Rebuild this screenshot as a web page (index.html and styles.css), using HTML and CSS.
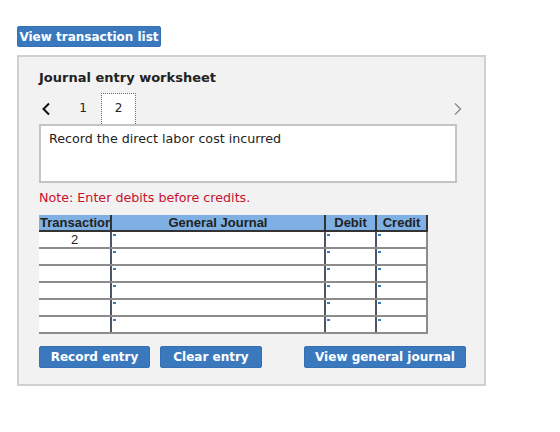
FILE: index.html
```html
<!DOCTYPE html>
<html lang="en">
<head>
    <meta charset="UTF-8">
    <title>Journal entry worksheet</title>
    <link rel="stylesheet" href="styles.css">
</head>
<body>

<div class="page">
    <button class="btn btn-list">View transaction list</button>

    <div class="worksheet">
        <h2 class="title">Journal entry worksheet</h2>

        <!-- tab strip -->
        <div class="tabs">
            <span class="arrow prev">
                <svg width="10" height="14" viewBox="0 0 10 14"><path d="M8 1.5 L2.5 7 L8 12.5" fill="none" stroke="#111" stroke-width="2"/></svg>
            </span>
            <span class="tab tab-first">1</span>
            <span class="tab active">2</span>
            <span class="arrow next">
                <svg width="10" height="14" viewBox="0 0 10 14"><path d="M2 1.5 L7.5 7 L2 12.5" fill="none" stroke="#8a8a8a" stroke-width="1.4"/></svg>
            </span>
        </div>

        <div class="desc">Record the direct labor cost incurred</div>

        <p class="note">Note: Enter debits before credits.</p>

        <table class="journal">
            <thead>
                <tr>
                    <th class="c-trans"><div class="clip">Transaction</div></th>
                    <th class="c-acct">General Journal</th>
                    <th class="c-debit">Debit</th>
                    <th class="c-credit">Credit</th>
                </tr>
            </thead>
            <tbody>
                <tr><td class="trans">2</td><td class="cell"></td><td class="cell"></td><td class="cell"></td></tr>
                <tr><td class="trans"></td><td class="cell"></td><td class="cell"></td><td class="cell"></td></tr>
                <tr><td class="trans"></td><td class="cell"></td><td class="cell"></td><td class="cell"></td></tr>
                <tr><td class="trans"></td><td class="cell"></td><td class="cell"></td><td class="cell"></td></tr>
                <tr><td class="trans"></td><td class="cell"></td><td class="cell"></td><td class="cell"></td></tr>
                <tr><td class="trans"></td><td class="cell"></td><td class="cell"></td><td class="cell"></td></tr>
            </tbody>
        </table>

        <div class="actions">
            <button class="btn btn-record">Record entry</button>
            <button class="btn btn-clear">Clear entry</button>
            <button class="btn btn-view">View general journal</button>
        </div>
    </div>
</div>

</body>
</html>
```

FILE: styles.css
```css
body {
    margin: 0;
    background-color: #ffffff;
    color: #222;
    font-family: "DejaVu Sans", Verdana, sans-serif;
}
.page {
    padding: 26px 0 0 17px;
}
.btn {
    font-family: "DejaVu Sans", Verdana, sans-serif;
    font-weight: bold;
    font-size: 12px;
    color: #ffffff;
    background-color: #3b79bf;
    border: 1px solid #3470b3;
    border-radius: 2px;
    height: 22px;
    padding: 0;
    cursor: pointer;
}
.btn-list {
    display: block;
    width: 144px;
    height: 21px;
}
.worksheet {
    margin-top: 8px;
    width: 465px;
    height: 327px;
    box-sizing: content-box;
    background-color: #f2f2f2;
    border: 2px solid #d0d0d0;
    padding: 0;
}
.title {
    font-size: 13px;
    font-weight: bold;
    margin: 13px 0 0 20px;
    line-height: 16px;
}
/* Tabs */
.tabs {
    display: flex;
    align-items: center;
    margin: 7px 0 0 20px;
    width: 418px;
    height: 31px;
    position: relative;
}
.arrow {
    display: flex;
    align-items: center;
}
.prev {
    margin-left: 2px;
}
.next {
    margin-left: auto;
    margin-right: -6px;
}
.tab {
    font-size: 12px;
    width: 35px;
    height: 31px;
    line-height: 31px;
    text-align: center;
    box-sizing: border-box;
}
.tab-first {
    width: 36px;
    margin-left: 14px;
}
.tab.active {
    background-color: #fff;
    border: 1px dotted #3a6fc4;
    border-bottom: none;
    line-height: 29px;
    position: relative;
    z-index: 1;
    margin-left: 0;
}
.desc {
    margin: 0 0 0 20px;
    width: 418px;
    height: 59px;
    box-sizing: border-box;
    background-color: #fff;
    border: 2px solid #c4c4c4;
    padding: 5px 8px;
    font-size: 12.7px;
}
.note {
    margin: 7px 0 0 20px;
    font-size: 12.7px;
    color: #c8102e;
    line-height: 16px;
}
/* Journal table */
.journal {
    margin: 9px 0 0 20px;
    border-collapse: collapse;
    table-layout: fixed;
    width: 389px;
    font-family: "Liberation Sans", Arial, sans-serif;
}
.journal th {
    background-color: #7eb0e3;
    font-size: 13px;
    font-weight: bold;
    color: #222;
    height: 15px;
    line-height: 15px;
    padding: 0;
    border-left: 2px solid #333;
    border-bottom: 2px solid #333;
}
.journal th:first-child {
    border-left: none;
    text-align: left;
}
.journal th:last-child {
    border-right: 2px solid #333;
}
.c-trans { width: 71px; }
.c-acct { width: 212px; }
.c-debit { width: 49px; }
.c-credit { width: 49px; }
.clip {
    overflow: hidden;
    white-space: nowrap;
    padding-left: 1px;
}
.journal td {
    height: 15px;
    padding: 0;
    background-color: #fff;
    border-bottom: 2px solid #8c8c8c;
}
.journal td.trans {
    text-align: center;
    font-size: 13px;
    line-height: 14px;
}
.journal td.cell {
    border-left: 2px solid #4d5663;
    background-image: linear-gradient(#3b79bf, #3b79bf);
    background-size: 3px 2px;
    background-position: 1px 2px;
    background-repeat: no-repeat;
}
.journal td.cell:last-child {
    border-right: 2px solid #8c8c8c;
}
.actions {
    display: flex;
    margin: 12px 0 0 20px;
}
.btn-record {
    width: 111px;
}
.btn-clear {
    width: 102px;
    margin-left: 10px;
}
.btn-view {
    width: 162px;
    margin-left: 42px;
}
```
